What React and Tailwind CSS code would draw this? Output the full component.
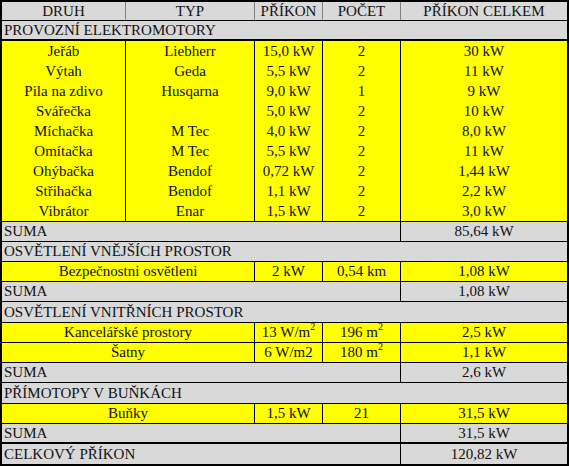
import React from 'react'

const motors = [
    ["Jeřáb", "Liebherr", "15,0 kW", "2", "30 kW"],
    ["Výtah", "Geda", "5,5 kW", "2", "11 kW"],
    ["Pila na zdivo", "Husqarna", "9,0 kW", "1", "9 kW"],
    ["Svářečka", "", "5,0 kW", "2", "10 kW"],
    ["Míchačka", "M Tec", "4,0 kW", "2", "8,0 kW"],
    ["Omítačka", "M Tec", "5,5 kW", "2", "11 kW"],
    ["Ohýbačka", "Bendof", "0,72 kW", "2", "1,44 kW"],
    ["Střihačka", "Bendof", "1,1 kW", "2", "2,2 kW"],
    ["Vibrátor", "Enar", "1,5 kW", "2", "3,0 kW"],
]

const Sup = ({ children }) => <span className="inline-block text-[10px] leading-[10px] align-top -mt-[2px]">{children}</span>

const Category = ({ label, h = "h-[20px]" }) => (
    <div className={`flex items-center ${h} border-b border-black bg-[#d9d9d9] pl-[2px]`}>
        {label}
    </div>
)

const Suma = ({ label = "SUMA", value, h = "h-[20px]", border = "border-b border-black" }) => (
    <div className={`flex ${h} ${border} bg-[#d9d9d9]`}>
        <div className="flex items-center w-[399px] border-r border-black pl-[2px]">{label}</div>
        <div className="flex flex-1 items-center justify-center">{value}</div>
    </div>
)

const WideRow = ({ name, a, b, total }) => (
    <div className="flex h-[20px] border-b border-black">
        <div className="flex items-center justify-center w-[253px] border-r border-black bg-[#ffff00]">{name}</div>
        <div className="flex items-center justify-center w-[68px] border-r border-black bg-[#ffff00]">{a}</div>
        <div className="flex items-center justify-center w-[78px] border-r border-black bg-[#ffff00]">{b}</div>
        <div className="flex flex-1 items-center justify-center bg-[#ffff00]">{total}</div>
    </div>
)

export default function App() {
    return (
        <div className="w-[569px] h-[466px] bg-white">
            <div className="w-[569px] h-[466px] border-2 border-black text-[15px] leading-[17px] text-[#111] font-[family-name:Liberation_Serif,serif] overflow-hidden">
                {/* header */}
                <div className="flex h-[19px] border-b border-black bg-[#d9d9d9]">
                    <div className="flex items-center justify-center w-[124px] border-r border-[#808080]">DRUH</div>
                    <div className="flex items-center justify-center w-[129px] border-r border-[#808080]">TYP</div>
                    <div className="flex items-center justify-center w-[68px] border-r border-[#808080]">PŘÍKON</div>
                    <div className="flex items-center justify-center w-[78px] border-r border-[#808080]">POČET</div>
                    <div className="flex flex-1 items-center justify-center">PŘÍKON CELKEM</div>
                </div>

                <div className="flex items-center h-[20px] border-b-2 border-black bg-[#d9d9d9] pl-[2px]">
                    PROVOZNÍ ELEKTROMOTORY
                </div>

                <div className="border-b border-black bg-[#ffff00]">
                    {motors.map((m) => (
                        <div key={m[0]} className="flex h-[20px]">
                            <div className="flex items-center justify-center w-[124px] border-r border-black">{m[0]}</div>
                            <div className="flex items-center justify-center w-[129px] border-r border-black">{m[1]}</div>
                            <div className="flex items-center justify-center w-[68px] border-r border-black">{m[2]}</div>
                            <div className="flex items-center justify-center w-[78px] border-r border-black">{m[3]}</div>
                            <div className="flex flex-1 items-center justify-center">{m[4]}</div>
                        </div>
                    ))}
                </div>

                <Suma value="85,64 kW" />
                <Category label="OSVĚTLENÍ VNĚJŠÍCH PROSTOR" />
                <WideRow name="Bezpečnostni osvětleni" a="2 kW" b="0,54 km" total="1,08 kW" />
                <Suma value="1,08 kW" />
                <Category label="OSVĚTLENÍ VNITŘNÍCH PROSTOR" h="h-[21px]" />
                <WideRow
                    name="Kancelářské prostory"
                    a={<span>13 W/m<Sup>2</Sup></span>}
                    b={<span>196 m<Sup>2</Sup></span>}
                    total="2,5 kW"
                />
                <WideRow
                    name="Šatny"
                    a="6 W/m2"
                    b={<span>180 m<Sup>2</Sup></span>}
                    total="1,1 kW"
                />
                <Suma value="2,6 kW" />
                <Category label="PŘÍMOTOPY V BUŇKÁCH" h="h-[21px]" />
                <WideRow name="Buňky" a="1,5 kW" b="21" total="31,5 kW" />
                <Suma value="31,5 kW" border="border-b-2 border-black" />
                <Suma label="CELKOVÝ PŘÍKON" value="120,82 kW" border="" />
            </div>
        </div>
    )
}
